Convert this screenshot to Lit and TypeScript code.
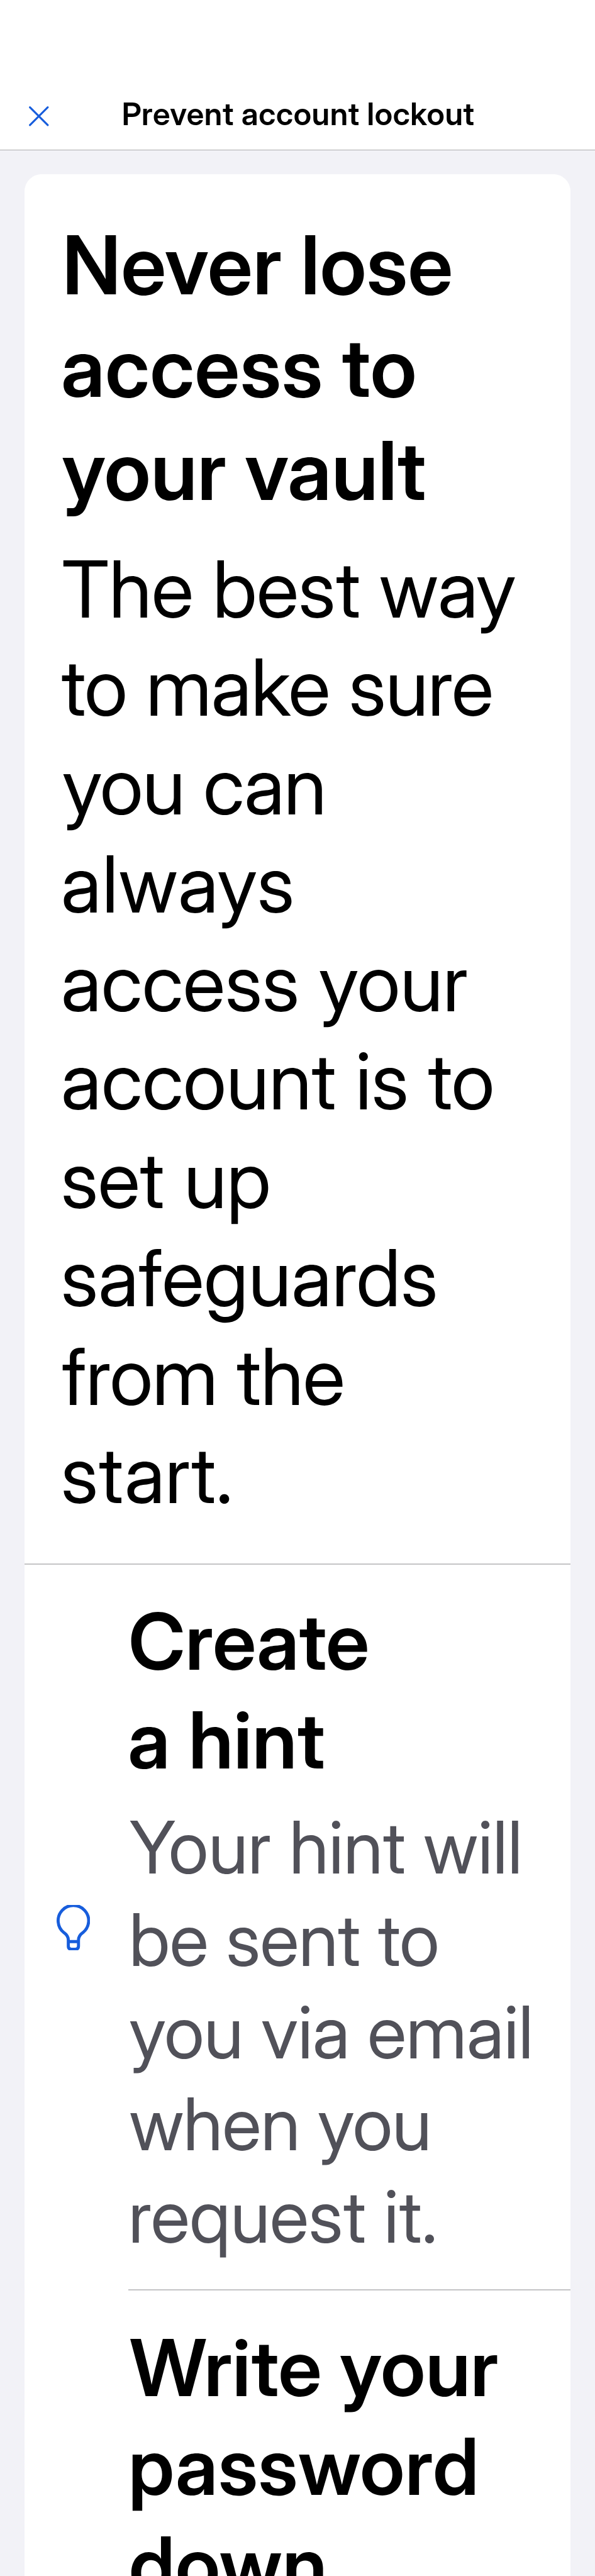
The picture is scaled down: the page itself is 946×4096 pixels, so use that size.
import { LitElement, html, css, svg } from "lit";
import { styleMap } from "lit/directives/style-map.js";

/** A typeset line: text, tracking in px, indent in px. */
type Line = [text: string, tracking: number, indent: number];

const heading: Line[] = [
  ["Never lose", 0.47, 1.9],
  ["access to", 0.72, -0.3],
  ["your vault", 0.1, 1.3],
];

const body: Line[] = [
  ["The best way", -0.52, 0.8],
  ["to make sure", -1.0, 0.8],
  ["you can", -1.16, 1.8],
  ["always", 0.89, -0.2],
  ["access your", -0.22, -0.2],
  ["account is to", -0.19, -0.2],
  ["set up", -0.16, -0.2],
  ["safeguards", 0, -0.2],
  ["from the", -0.75, 1.8],
  ["start.", -0.06, -0.2],
];

interface Tip {
  icon: boolean;
  title: Line[];
  text: Line[];
}

const tips: Tip[] = [
  {
    icon: true,
    title: [
      ["Create", 0.11, 0.2],
      ["a hint", 0.56, -1],
    ],
    text: [
      ["Your hint will", -0.19, 1.5],
      ["be sent to", -0.52, 1],
      ["you via email", -0.49, 1],
      ["when you", -0.82, 1.5],
      ["request it.", -0.29, 0.1],
    ],
  },
  {
    icon: false,
    title: [
      ["Write your", 0.22, 2.3],
      ["password", 0.74, 0.1],
      ["down", 0.86, 1],
    ],
    text: [],
  },
];

const lines = (items: Line[]) =>
  items.map(
    ([text, tracking, indent]) =>
      html`<span class="line" style=${styleMap({ letterSpacing: `${tracking}px`, marginLeft: `${indent}px` })}
        >${text}</span
      >`
  );

const closeIcon = html`<svg class="close" viewBox="0 0 39 39" fill="none" stroke="#175ddc" stroke-width="3.8" stroke-linecap="round">
  ${svg`<path d="M2 2 37 37M37 2 2 37" />`}
</svg>`;

const bulbIcon = html`<svg class="bulb" viewBox="0 0 66 90" fill="none" stroke="#175ddc" stroke-width="6">
  ${svg`<path d="M23 72V69C23 62.5 19.5 58 14.5 54.5A30 30 0 1 1 51.5 54.5C46.5 58 43 62.5 43 69V81Q43 87 37 87H29Q23 87 23 81V72H43" />`}
</svg>`;

class AppRoot extends LitElement {
  static styles = css`
    :host {
      display: flex;
      flex-direction: column;
      width: 946px;
      height: 4096px;
      overflow: hidden;
      background: #f2f2f7;
      color: #000;
      font-family: "Inter Display", Inter, sans-serif;
    }
    h1, h2, h3, p { margin: 0; }
    .bar {
      box-sizing: border-box;
      flex: none;
      display: flex;
      align-items: flex-start;
      height: 238.5px;
      padding: 151px 0 0 46.1px;
      background: #fff;
      border-bottom: 1px solid #acacae;
    }
    .close { width: 31.5px; height: 31.5px; margin-top: 18.1px; }
    .bar h1 {
      margin-left: 116.1px;
      font-size: 49.7px;
      font-weight: 600;
      line-height: 60px;
      letter-spacing: 0.62px;
      white-space: nowrap;
    }
    .card {
      flex: 1;
      margin: 38.1px 38.8px 0;
      border-radius: 27px 27px 0 0;
      background: #fff;
    }
    .line { display: block; white-space: nowrap; }
    .intro {
      padding: 63.1px 0 62.2px 58.2px;
      border-bottom: 2.4px solid #c4c4c6;
    }
    .intro h2 { font-size: 129.3px; font-weight: 600; line-height: 163.6px; }
    .intro p {
      margin-top: 28.1px;
      font-size: 124.7px;
      line-height: 156.5px;
    }
    .tip { display: flex; align-items: center; }
    .slot {
      box-sizing: border-box;
      flex: none;
      display: flex;
      width: 165.2px;
      padding-left: 50.9px;
    }
    .bulb { width: 53.4px; height: 72.8px; }
    .copy {
      flex: 1;
      padding: 44.6px 0 42.2px;
      border-bottom: 2.4px solid #c4c4c6;
    }
    .copy h3 { font-size: 124.6px; font-weight: 600; line-height: 156.9px; }
    .copy p {
      margin-top: 17.9px;
      color: #515159;
      font-size: 115.3px;
      line-height: 146.8px;
    }
  `;

  render() {
    return html`
      <header class="bar">
        ${closeIcon}
        <h1>Prevent account lockout</h1>
      </header>
      <main class="card">
        <section class="intro">
          <h2>${lines(heading)}</h2>
          <p>${lines(body)}</p>
        </section>
        ${tips.map(
          (tip) => html`<section class="tip">
            <div class="slot">${tip.icon ? bulbIcon : null}</div>
            <div class="copy">
              <h3>${lines(tip.title)}</h3>
              ${tip.text.length ? html`<p>${lines(tip.text)}</p>` : null}
            </div>
          </section>`
        )}
      </main>
    `;
  }
}

customElements.define("app-root", AppRoot);
